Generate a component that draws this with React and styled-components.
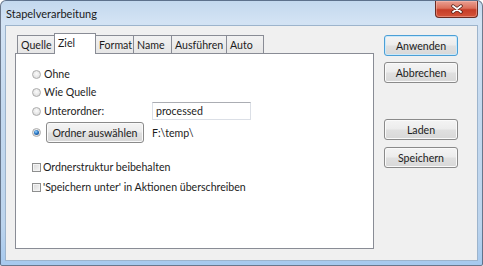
import styled, { createGlobalStyle } from "styled-components";

const GlobalStyle = createGlobalStyle`
  html, body {
    margin: 0;
    padding: 0;
    background: #fff;
  }
  body {
    font-family: Lato, "Noto Sans", sans-serif;
    font-size: 10.6px;
    color: #1c1c1c;
  }
`;

const Window = styled.div`
  width: 483px;
  height: 266px;
  box-sizing: border-box;
  border: 1px solid rgba(45, 55, 75, 0.6);
  border-radius: 6px 6px 2px 2px;
  background: linear-gradient(
    180deg,
    #c3d8ee 0%,
    #d3e3f4 8%,
    #c4d9ef 40%,
    #bcd4ed 85%,
    #a6c9ee 100%
  );
  display: flex;
  flex-direction: column;
  overflow: hidden;
`;

const TitleBar = styled.div`
  height: 25px;
  display: flex;
  align-items: flex-start;
`;

const Title = styled.div`
  flex: 1;
  padding-left: 5px;
  height: 25px;
  line-height: 25px;
  font-size: 11px;
  color: #1a1a1a;
`;

const CloseButton = styled.div`
  width: 43px;
  height: 17px;
  margin-right: 4px;
  box-sizing: border-box;
  border: 1px solid #6a2b22;
  border-top: none;
  border-radius: 0 0 4px 4px;
  background: linear-gradient(
    180deg,
    #e9a093 0%,
    #dc6f5a 45%,
    #c63d28 55%,
    #d4543a 100%
  );
  box-shadow: inset 0 0 0 1px rgba(255, 205, 195, 0.4);
  display: flex;
  align-items: center;
  justify-content: center;
`;

const Client = styled.div`
  flex: 1;
  margin: 0 5px 5px;
  background: #f0f0f0;
  box-shadow: 0 0 0 1px #9db4cc;
  display: flex;
  align-items: flex-start;
  padding: 7px 0 0 9px;
  box-sizing: border-box;
`;

const LeftColumn = styled.div`
  width: 359px;
  display: flex;
  flex-direction: column;
`;

const TabStrip = styled.div`
  height: 20px;
  display: flex;
  align-items: flex-end;
  padding-left: 2px;
`;

const Tab = styled.div`
  width: ${(p) => p.$width}px;
  height: ${(p) => (p.$active ? 21 : 18)}px;
  margin-right: -1px;
  margin-bottom: ${(p) => (p.$active ? -1 : 0)}px;
  box-sizing: border-box;
  border: 1px solid #898c95;
  border-bottom: none;
  padding: 1px 0 0 3px;
  line-height: 16px;
  white-space: nowrap;
  overflow: hidden;
  background: ${(p) =>
    p.$active ? "#fff" : "linear-gradient(180deg, #f2f2f2 0%, #e6e6e6 100%)"};
  position: relative;
  z-index: ${(p) => (p.$active ? 2 : 1)};
`;

const Panel = styled.div`
  height: 196px;
  box-sizing: border-box;
  border: 1px solid #898c95;
  background: #fff;
  padding: 11px 0 0 16px;
  display: flex;
  flex-direction: column;
`;

const Row = styled.div`
  height: ${(p) => p.$h || 18}px;
  margin-top: ${(p) => p.$mt || 0}px;
  display: flex;
  align-items: center;
  white-space: nowrap;
`;

const Radio = styled.span`
  width: 9px;
  height: 9px;
  flex-shrink: 0;
  box-sizing: border-box;
  border-radius: 50%;
  border: 1px solid #acacac;
  background: radial-gradient(circle at 50% 40%, #fbfbfb 0, #e0e0e0 75%);
  margin-right: ${(p) => p.$gap}px;
  display: flex;
  align-items: center;
  justify-content: center;
  &::after {
    content: "";
    display: ${(p) => (p.$checked ? "block" : "none")};
    width: 5px;
    height: 5px;
    border-radius: 50%;
    background: radial-gradient(
      circle at 40% 35%,
      #9ad6ff 0,
      #2b78c6 45%,
      #0c3b74 100%
    );
  }
`;

const CheckBox = styled.span`
  width: 9px;
  height: 9px;
  flex-shrink: 0;
  box-sizing: border-box;
  border: 1px solid #8e8f8f;
  background: linear-gradient(135deg, #d9d9d9 0%, #f5f5f5 100%);
  box-shadow: inset 0 0 0 1px #f3f3f3;
  margin-right: 2px;
`;

const Label = styled.span`
  width: ${(p) => (p.$width ? `${p.$width}px` : "auto")};
  flex-shrink: 0;
`;

const TextBox = styled.input`
  width: 99px;
  height: 18px;
  box-sizing: border-box;
  border: 1px solid #dbdfe6;
  border-top-color: #abadb3;
  padding: 0 3px;
  font: inherit;
  color: #1c1c1c;
  background: #fff;
  outline: none;
`;

const PushButton = styled.button`
  width: ${(p) => p.$width}px;
  height: 21px;
  margin-top: ${(p) => p.$mt || 0}px;
  padding: 0;
  box-sizing: border-box;
  font: inherit;
  color: #1c1c1c;
  border: 1px solid ${(p) => (p.$default ? "#4b9fd6" : "#8a8a8a")};
  border-radius: 3px;
  background: linear-gradient(
    180deg,
    #f4f4f4 0%,
    #ececec 48%,
    #e0e0e0 52%,
    #d8d8d8 100%
  );
  box-shadow: inset 0 0 0 1px ${(p) => (p.$default ? "#cbe9fa" : "#fafafa")};
  flex-shrink: 0;
`;

const PathText = styled.span`
  margin-left: 8px;
`;

const RightColumn = styled.div`
  margin-left: 10px;
  padding-top: 2px;
  display: flex;
  flex-direction: column;
`;

const tabs = [
  { label: "Quelle", width: 38 },
  { label: "Ziel", width: 42, active: true },
  { label: "Format", width: 39 },
  { label: "Name", width: 39 },
  { label: "Ausführen", width: 56 },
  { label: "Auto", width: 38 },
];

function CloseIcon() {
  return (
    <svg width="14" height="10" viewBox="0 0 14 10">
      <path
        d="M3 2 L11 8 M11 2 L3 8"
        stroke="#4a1c15"
        strokeWidth="3.4"
        strokeLinecap="round"
        fill="none"
      />
      <path
        d="M3 2 L11 8 M11 2 L3 8"
        stroke="#fff"
        strokeWidth="1.9"
        strokeLinecap="round"
        fill="none"
      />
    </svg>
  );
}

export default function App() {
  return (
    <>
      <GlobalStyle />
      <Window>
        <TitleBar>
          <Title>Stapelverarbeitung</Title>
          <CloseButton>
            <CloseIcon />
          </CloseButton>
        </TitleBar>
        <Client>
          <LeftColumn>
            <TabStrip>
              {tabs.map((t) => (
                <Tab key={t.label} $width={t.width} $active={t.active}>
                  {t.label}
                </Tab>
              ))}
            </TabStrip>
            <Panel>
              <Row>
                <Radio $gap={3} />
                <Label>Ohne</Label>
              </Row>
              <Row>
                <Radio $gap={3} />
                <Label>Wie Quelle</Label>
              </Row>
              <Row $mt={1}>
                <Radio $gap={3} />
                <Label $width={108}>Unterordner:</Label>
                <TextBox readOnly value="processed" />
              </Row>
              <Row $h={21} $mt={2}>
                <Radio $gap={5} $checked />
                <PushButton $width={98}>Ordner auswählen</PushButton>
                <PathText>F:\temp\</PathText>
              </Row>
              <Row $mt={15}>
                <CheckBox />
                <Label>Ordnerstruktur beibehalten</Label>
              </Row>
              <Row $mt={2}>
                <CheckBox />
                <Label>'Speichern unter' in Aktionen überschreiben</Label>
              </Row>
            </Panel>
          </LeftColumn>
          <RightColumn>
            <PushButton $width={74} $default>
              Anwenden
            </PushButton>
            <PushButton $width={74} $mt={6}>
              Abbrechen
            </PushButton>
            <PushButton $width={74} $mt={36}>
              Laden
            </PushButton>
            <PushButton $width={74} $mt={7}>
              Speichern
            </PushButton>
          </RightColumn>
        </Client>
      </Window>
    </>
  );
}
